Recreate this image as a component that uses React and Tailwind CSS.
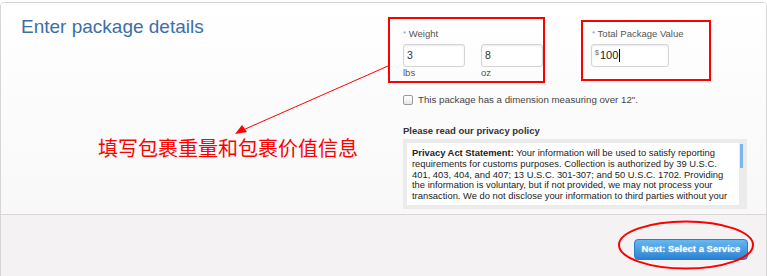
import React from "react"

const lines = [
  "requirements for customs purposes. Collection is authorized by 39 U.S.C.",
  "401, 403, 404, and 407; 13 U.S.C. 301-307; and 50 U.S.C. 1702. Providing",
  "the information is voluntary, but if not provided, we may not process your",
  "transaction. We do not disclose your information to third parties without your",
]

function Field({ value, className = "" }) {
  return (
    <div className={`h-[23px] rounded-[3px] border border-[#d4d4d4] bg-white shadow-[inset_0_1px_2px_rgba(0,0,0,0.08)] flex items-center px-[3px] text-[10.5px] text-[#333] ${className}`}>
      {value}
    </div>
  )
}

export default function App() {
  return (
    <div className="w-[767px] h-[276px] overflow-hidden bg-white font-['Liberation_Sans',Arial,sans-serif] relative">
      <div className="mt-[2px] w-[767px] h-[290px] border border-[#d6d6d6] rounded-[4px] flex flex-col overflow-hidden">
        {/* top section */}
        <div className="h-[211px] flex bg-gradient-to-b from-white to-[#f8f8f8]">
          <div className="w-[387px] shrink-0 flex flex-col">
            <h1 className="pl-[20px] pt-[13px] text-[19px] leading-[22px] text-[#3d6ea9]">
              Enter package details
            </h1>
            <div className="mt-[99px] ml-[97px] text-[20px] leading-[22px] text-[#ff0000] font-['Noto_Sans_CJK_SC',sans-serif]">
              填写包裹重量和包裹价值信息
            </div>
          </div>

          <div className="flex flex-col">
            <div className="flex">
              <div className="mt-[14px] w-[157px] h-[66px] border-2 border-[#ff0000] pl-[13px] pt-[8px]">
                <div className="text-[9.5px] leading-[14px] text-[#555]">
                  <span className="text-[#7a9fd6] text-[8px] align-top">*</span> Weight
                </div>
                <div className="mt-[3px] flex gap-[16px]">
                  <div className="flex flex-col">
                    <Field value="3" className="w-[62px]" />
                    <span className="text-[9.5px] leading-[11px] text-[#555]">lbs</span>
                  </div>
                  <div className="flex flex-col">
                    <Field value="8" className="w-[62px]" />
                    <span className="text-[9.5px] leading-[11px] text-[#555]">oz</span>
                  </div>
                </div>
              </div>
              <div className="ml-[36px] mt-[17px] w-[130px] h-[61px] border-2 border-[#ff0000] pl-[8px] pt-[5px]">
                <div className="pl-[1px] text-[9.5px] leading-[14px] text-[#555]">
                  <span className="text-[#7a9fd6] text-[8px] align-top">*</span> Total Package Value
                </div>
                <Field
                  className="mt-[3px] w-[78px]"
                  value={
                    <span className="flex items-center">
                      <span className="text-[7px] text-[#666] -mt-[4px] mr-[1px]">$</span>
                      <span className="text-[11px] text-[#222]">100</span>
                      <span className="ml-[1px] w-px h-[13px] bg-black" />
                    </span>
                  }
                />
              </div>
            </div>

            <label className="ml-[15px] mt-[11px] flex items-center gap-[5px] text-[9.7px] leading-[12px] text-[#444]">
              <span className="w-[10px] h-[10px] rounded-[2px] border border-[#9a9a9a] bg-gradient-to-b from-white to-[#e8e8e8]" />
              This package has a dimension measuring over 12".
            </label>

            <div className="ml-[15px] mt-[19px] text-[9.5px] leading-[12px] font-bold text-[#333]">
              Please read our privacy policy
            </div>

            <div className="ml-[15px] mt-[2px] w-[344px] h-[70px] bg-[#ebebeb] p-[4px] flex">
              <div className="flex-1 bg-white overflow-hidden pl-[5px] pt-[5px] text-[9.4px] leading-[10.8px] text-[#222] whitespace-nowrap">
                <div>
                  <span className="font-bold">Privacy Act Statement:</span> Your information will be used to satisfy reporting
                </div>
                {lines.map((l) => (
                  <div key={l}>{l}</div>
                ))}
              </div>
              <div className="w-[3px] ml-[1px] h-[24px] mt-[1px] bg-[#7db6ea]" />
            </div>
          </div>
        </div>

        {/* footer */}
        <div className="flex-1 border-t border-[#d8d8d8] bg-[#f4f2f3] flex justify-end items-start pr-[18px] pt-[24px]">
          <button className="h-[21px] w-[114px] rounded-[4px] border border-[#2c7dc8] bg-gradient-to-b from-[#66b8f0] to-[#2a83d2] text-white text-[9.5px] font-bold [text-shadow:0_0_2px_rgba(255,255,255,0.6)]">
            Next: Select a Service
          </button>
        </div>
      </div>

      {/* annotations */}
      <svg className="absolute inset-0 pointer-events-none" width="767" height="276">
        <line x1="388" y1="66" x2="243" y2="130" stroke="#ff0000" strokeWidth="1" />
        <polygon points="235,134 242,125 247,132" fill="#ff0000" />
        <ellipse cx="686" cy="245" rx="67" ry="23.5" fill="none" stroke="#ff0000" strokeWidth="2" />
      </svg>
    </div>
  )
}
